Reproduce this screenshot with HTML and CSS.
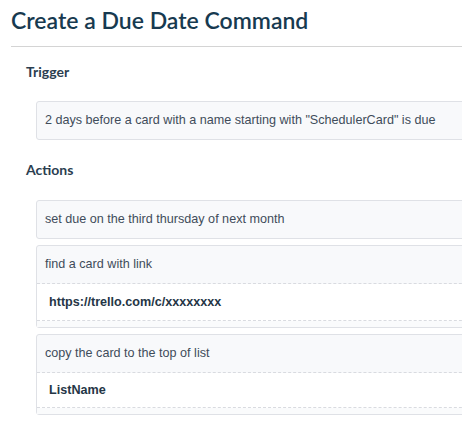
FILE: index.html
```html
<!DOCTYPE html>
<html>
<head>
<meta charset="utf-8">
<link rel="stylesheet" href="styles.css">
</head>
<body>
<div class="page">
  <h1 class="title">Create a Due Date Command</h1>
  <div class="rule"></div>
  <div class="section">
    <div class="label">Trigger</div>
    <div class="cards first">
      <div class="card">
        <div class="card-head">2 days before a card with a name starting with "SchedulerCard" is due</div>
      </div>
    </div>
    <div class="label actions">Actions</div>
    <div class="cards">
      <div class="card">
        <div class="card-head">set due on the third thursday of next month</div>
      </div>
      <div class="card">
        <div class="card-head dashed">find a card with link</div>
        <div class="card-input">https://trello.com/c/xxxxxxxx</div>
        <div class="card-foot"></div>
      </div>
      <div class="card">
        <div class="card-head dashed">copy the card to the top of list</div>
        <div class="card-input short">ListName</div>
        <div class="card-foot"></div>
      </div>
    </div>
  </div>
</div>
</body>
</html>
```
FILE: styles.css
```css
html, body {
  margin: 0;
  padding: 0;
  background: #fff;
  overflow: hidden;
}
.page {
  width: 520px;
  padding: 8px 0 0 11px;
  font-family: Lato, "Noto Sans", sans-serif;
}
.title {
  margin: 0;
  font-size: 23px;
  line-height: 24px;
  font-weight: 600;
  color: #173a50;
}
.rule {
  margin-top: 14px;
  height: 1px;
  background: #d4d4d4;
}
.section {
  padding-left: 15px;
}
.label {
  margin-top: 17px;
  font-size: 14px;
  line-height: 16px;
  font-weight: 700;
  color: #2b3e50;
}
.label.actions {
  margin-top: 22px;
}
.cards {
  margin-top: 22px;
  padding-left: 10px;
  display: flex;
  flex-direction: column;
  gap: 6px;
}
.cards.first {
  margin-top: 21px;
}
.card {
  width: 450px;
  border: 1px solid #dfe1e6;
  border-radius: 3px;
  background: #f8f9fb;
  font-family: "Liberation Sans", Arial, sans-serif;
}
.card-head {
  height: 37px;
  line-height: 37px;
  padding-left: 8px;
  font-size: 12.6px;
  color: #3f4c5a;
  white-space: nowrap;
}
.card-head.dashed {
  border-bottom: 1px dashed #d9dbe0;
}
.card-input {
  height: 36px;
  line-height: 36px;
  padding-left: 12px;
  background: #fff;
  font-size: 12.6px;
  font-weight: 700;
  color: #253646;
  border-bottom: 1px dashed #d9dbe0;
}
.card-input.short {
  height: 34px;
  line-height: 34px;
}
.card-foot {
  height: 6px;
  background: #fafbfc;
}
```
